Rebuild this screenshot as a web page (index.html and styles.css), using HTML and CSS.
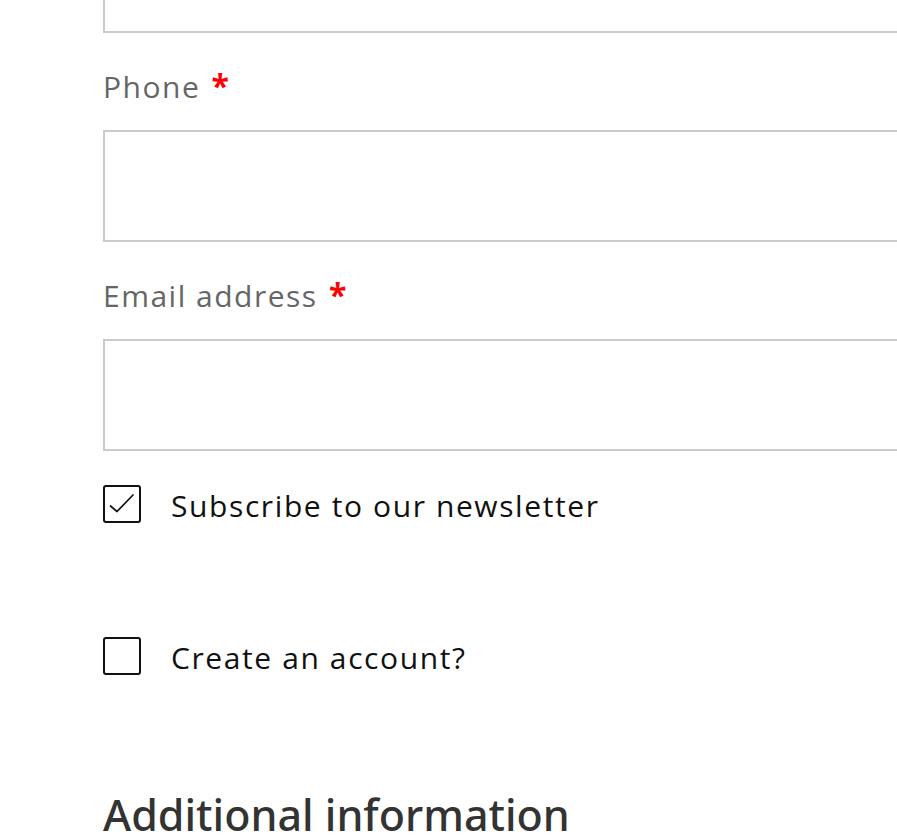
FILE: index.html
```html
<!DOCTYPE html>
<html lang="en">
<head>
<meta charset="utf-8">
<title>Checkout</title>
<link rel="stylesheet" href="styles.css">
</head>
<body>
<form class="checkout">
  <div class="field field-first">
    <input class="text-input" type="text" aria-label="Previous field">
  </div>
  <div class="field">
    <label class="field-label" for="phone">Phone <abbr class="req" title="required">*</abbr></label>
    <input class="text-input" id="phone" type="tel">
  </div>
  <div class="field">
    <label class="field-label" for="email">Email address <abbr class="req" title="required">*</abbr></label>
    <input class="text-input" id="email" type="email">
  </div>
  <label class="check-row check-newsletter">
    <span class="check-box is-checked">
      <svg viewBox="0 0 38 38" width="38" height="38" aria-hidden="true"><path d="M7.5 21 L14 26.5 L30 10" fill="none" stroke="#111" stroke-width="1.7" stroke-linecap="round" stroke-linejoin="round"/></svg>
    </span>
    <span class="check-text">Subscribe to our newsletter</span>
  </label>
  <label class="check-row check-account">
    <span class="check-box"></span>
    <span class="check-text">Create an account?</span>
  </label>
  <h3 class="section-title">Additional information</h3>
</form>
</body>
</html>
```
FILE: styles.css
```css
html, body {
  margin: 0;
  padding: 0;
  overflow: hidden;
  background: #fff;
}
body {
  width: 897px;
  height: 839px;
}
.checkout {
  padding-left: 103px;
  margin-top: -79px;
  font-family: "Open Sans", "Noto Sans", sans-serif;
}
.field {
  margin-bottom: 36px;
}
.field-label {
  display: block;
  height: 36px;
  color: #666;
  font-size: 30px;
  line-height: 36px;
  letter-spacing: 1.5px;
  margin-bottom: 25px;
}
.req {
  color: #f00;
  font-weight: 700;
  font-size: 32px;
  line-height: 1;
  text-decoration: none;
  border: 0;
  margin-left: 2px;
}
.text-input {
  display: block;
  box-sizing: border-box;
  width: 860px;
  height: 112px;
  border: 2px solid #cbcbcb;
  border-radius: 0;
  background: #fff;
  margin: 0;
  padding: 0 20px;
  outline: none;
}
.check-row {
  display: flex;
  align-items: center;
  gap: 30px;
  height: 38px;
  color: #111;
  font-size: 30px;
  letter-spacing: 1.6px;
}
.check-newsletter {
  margin-top: -2px;
}
.check-text {
  padding-top: 2px;
}
.check-account {
  margin-top: 114px;
}
.check-box {
  box-sizing: border-box;
  width: 38px;
  height: 38px;
  border: 2px solid #111;
  border-radius: 3px;
  flex: none;
  display: flex;
}
.check-box svg {
  margin: -2px;
}
.section-title {
  margin: 112px 0 0;
  font-family: "Noto Sans", "Open Sans", sans-serif;
  font-weight: 500;
  font-size: 43px;
  line-height: 56px;
  color: #333;
}
```
